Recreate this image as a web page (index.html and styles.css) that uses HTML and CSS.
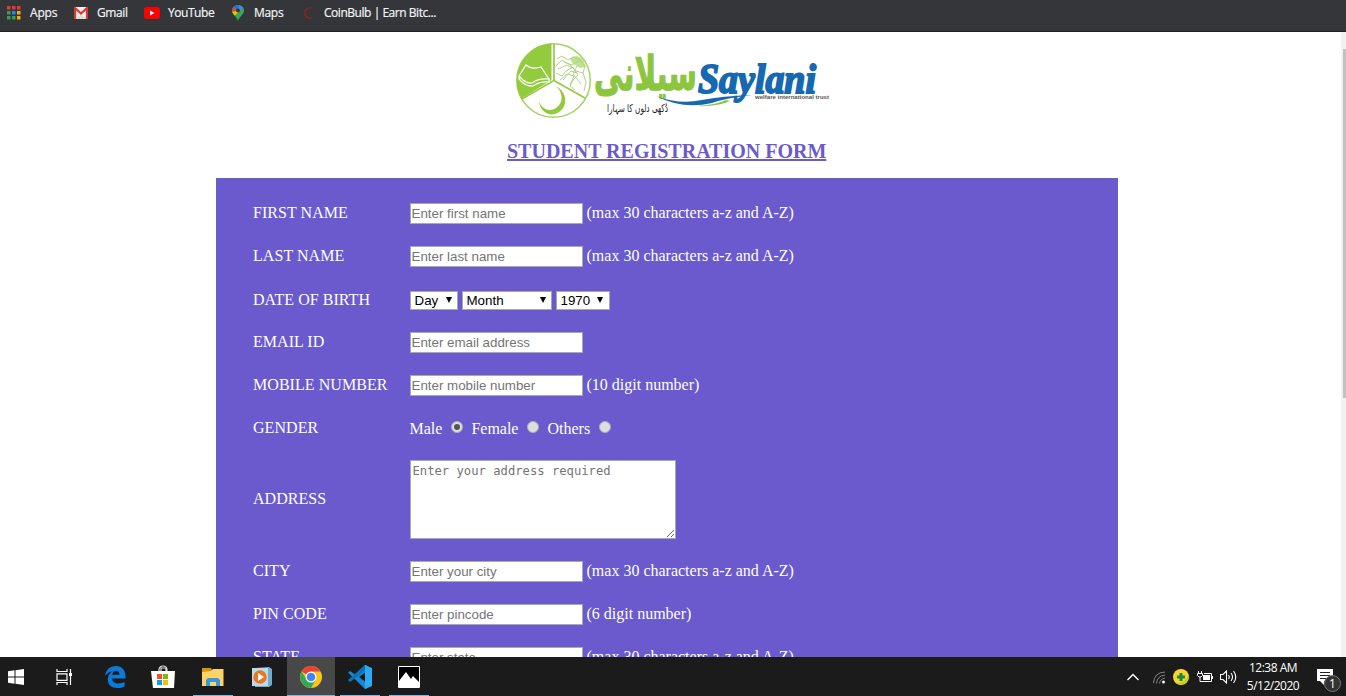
FILE: index.html
```
<!DOCTYPE html>
<html lang="en">
<head>
<meta charset="utf-8">
<title>Student Registration Form</title>
<link rel="stylesheet" href="styles.css">
</head>
<body>
<header class="bookmarks">
  <div class="bm bm-apps"><svg width="14" height="14"><g fill="#e8392f"><path d="M0 0h3.500v3.500H0zM5 0h3.500v3.500H5zM10 0h3.500v3.500H10z"/></g><path fill="#35a055" d="M0 5h3.500v3.500H0zM0 10h3.500v3.500H0z"/><path fill="#2684fc" d="M5 5h3.500v3.500H5z"/><path fill="#35a055" d="M5 10h3.500v3.500H5z"/><path fill="#f9ab00" d="M10 5h3.500v3.500H10zM10 10h3.500v3.500H10z"/></svg><span>Apps</span></div>
  <div class="bm bm-gmail"><svg width="14" height="12"><path fill="#eee" d="M0 0h14v12H0z"/><path fill="#ddd" d="M2 12l5-5 5 5z"/><path fill="none" stroke="#d93a30" stroke-width="2.2" d="M1 12V1l6 5.500L13 1v11"/></svg><span>Gmail</span></div>
  <div class="bm bm-youtube"><svg width="16" height="12"><rect width="16" height="12" rx="3" fill="#f00"/><path fill="#fff" d="M6 3.500v5L10.500 6z"/></svg><span>YouTube</span></div>
  <div class="bm bm-maps"><svg width="12" height="16" viewBox="0 0 12 16"><path fill="#34a853" d="M6 16C5 12 0 9.500 0 5.500a6 5.500 0 0 1 12 0C12 9.500 7 12 6 16z"/><path fill="#4285f4" d="M6 5.500L4 .5a6 5.500 0 0 1 7.500 3z"/><path fill="#1a73e8" d="M6 5.500L1.500 2 4 .4 7 .2z"/><path fill="#ea4335" d="M6 5.500L1.500 2Q0 4 .2 7z"/><path fill="#fbbc04" d="M6 5.500L.2 7 2.500 10.500 8 6z"/><circle cx="6" cy="5.500" r="2" fill="#35363a"/></svg><span>Maps</span></div>
  <div class="bm bm-coin"><svg width="8" height="12"><path fill="none" stroke="#a81c22" stroke-width="1.200" d="M7.500 1H4L1 4v4l3 3h3.500"/></svg><span>CoinBulb | Earn Bitc...</span></div>
</header>

<main class="page">
  <div class="content">
    <svg class="logo" width="330" height="90" viewBox="510 36 330 90" role="img" aria-label="Saylani welfare international trust">
      <circle cx="553.500" cy="80.500" r="36.800" fill="#fff" stroke="#a5d363" stroke-width="1.500"/>
      <path fill="#93cb3f" d="M551.500 80V43.500A37 37 0 0 0 521.500 98.500z"/>
      <path fill="none" stroke="#a5d363" stroke-width="2" d="M554 44v36"/>
      <path fill="none" stroke="#93cb3f" stroke-width="1.600" d="M553 81l-31 18M553 80l32 18"/>
      <path fill="#93cb3f" d="M556 86C569 93 568 110 555 114C547 116 540 110 539 102C543 110 550 112 556 108C564 103 563 92 556 86z"/>
      <path fill="none" stroke="#fff" stroke-width="1.200" d="M519 76l7-11q6 5 15 2l8 12q-11-1-17 4-6 1-13-7zM519 76v3q7 8 14 7 7-5 16-4v-3"/>
      <path fill="#bfe292" d="M570 59q6-6 13 0l3 8-6 1-8-5z"/>
      <path fill="none" stroke="#a9cd80" stroke-width=".9" d="M557 59l5-3 6 4 5-3 7 3 5 6-2 7 3 9-2 9M556 66l6-6 8 5 6 6 7 2M556 73l6 3 4-5 7-4 5 8-5 5-3 6 5 4M560 80l7-6 7 2-4 9M564 62l8 3 6-4M558 69l9-4 5 3M577 66l-4 8 8 10M563 80l8-9 6 2"/>
      <text class="urdu" transform="translate(594 90) scale(1 1.250)" x="0" y="0" textLength="103" lengthAdjust="spacingAndGlyphs">سیلانی</text>
      <path fill="#1668b0" d="M656 96q23 9 46 4 20-4 50-5-26 3-40 8-29 7-56-7z"/>
      <path fill="#8cc63f" d="M696 106q20-1 30-6l4 1q-12 6-34 5z"/>
      <text class="brand" x="698" y="93" textLength="118" lengthAdjust="spacingAndGlyphs">Saylani</text>
      <text class="trust" x="755" y="99" textLength="74" lengthAdjust="spacingAndGlyphs">welfare international trust</text>
      <text class="motto" x="607" y="112" textLength="61" lengthAdjust="spacingAndGlyphs">دُکھی دلوں کا سہارا</text>
    </svg>
    <h1 class="title">STUDENT REGISTRATION FORM</h1>
    <form class="form">
      <div class="row"><label>FIRST NAME</label><div class="field"><input class="text" placeholder="Enter first name"><span>(max 30 characters a-z and A-Z)</span></div></div>
      <div class="row"><label>LAST NAME</label><div class="field"><input class="text" placeholder="Enter last name"><span>(max 30 characters a-z and A-Z)</span></div></div>
      <div class="row row-date"><label>DATE OF BIRTH</label><div class="field">
        <div class="select day">Day<i></i></div><div class="select month">Month<i></i></div><div class="select year">1970<i></i></div></div></div>
      <div class="row"><label>EMAIL ID</label><div class="field"><input class="text" placeholder="Enter email address"></div></div>
      <div class="row"><label>MOBILE NUMBER</label><div class="field"><input class="text" placeholder="Enter mobile number"><span>(10 digit number)</span></div></div>
      <div class="row row-gender"><label>GENDER</label><div class="field"><span>Male</span><b class="radio on"></b><span>Female</span><b class="radio"></b><span>Others</span><b class="radio"></b></div></div>
      <div class="row row-address"><label>ADDRESS</label><div class="field"><textarea class="area" placeholder="Enter your address required"></textarea></div></div>
      <div class="row"><label>CITY</label><div class="field"><input class="text" placeholder="Enter your city"><span>(max 30 characters a-z and A-Z)</span></div></div>
      <div class="row"><label>PIN CODE</label><div class="field"><input class="text" placeholder="Enter pincode"><span>(6 digit number)</span></div></div>
      <div class="row"><label>STATE</label><div class="field"><input class="text" placeholder="Enter state"><span>(max 30 characters a-z and A-Z)</span></div></div>
    </form>
  </div>
  <div class="scrollbar"><div class="thumb"></div></div>
</main>

<footer class="taskbar">
  <div class="apps">
    <div class="app start"><svg width="16" height="16"><path fill="#fff" d="M0 2.200L6.500 1.300V7.500H0zM7.500 1.200L16 0v7.500H7.500zM0 8.500h6.500v6.200L0 13.800zM7.500 8.500H16V16l-8.500-1.200z"/></svg></div>
    <div class="app view"><svg width="17" height="16"><path fill="none" stroke="#fff" stroke-width="1.200" d="M1 0v2.500h10V0M1 4.800h10v6.500H1zM1 16v-2.500h10V16M14.500 0v16"/><path fill="#fff" d="M13 4h3v3h-3z"/></svg></div>
    <div class="app edge"><svg width="21" height="22" viewBox="0 0 21 22"><path fill="#0a7bdc" d="M0 10C1 3.500 5 0 11 0c6 0 9.500 4.500 9.500 10v2.500H7c.2 3.200 3 5 6.500 5 2.300 0 4.200-.7 6-1.700v4.600C17.300 21.600 15 22 12.500 22 6.500 22 2.700 18.500 2.700 13.500c0-3.500 2-6.700 5-8.300C4.500 5.600 2 7.200 0 10zm7.200-1.300h7.300c0-2.500-1.200-4-3.500-4-2 0-3.400 1.600-3.800 4z"/></svg></div>
    <div class="app store"><svg width="24" height="23" viewBox="0 0 24 23"><path fill="none" stroke="#ddd" stroke-width="1.200" d="M8 8V5q0-4 4-4t4 4v3M10 7V3h5v4"/><path fill="#fff" d="M0 6h24l-1 17H2z"/><path fill="#f25022" d="M6 9h5v5H6z"/><path fill="#7fba00" d="M12 9h5v5h-5z"/><path fill="#00a4ef" d="M6 15h5v5H6z"/><path fill="#ffb900" d="M12 15h5v5h-5z"/></svg></div>
    <div class="app open"><svg width="22" height="18"><path fill="#d9920b" d="M0 0h9l1 2v3H0z"/><path fill="#fbd367" d="M0 4l9-1 2-2h10.500v17H0z"/><path fill="#3b97dc" d="M4 18v-6l2-2h10l2 2v6h-4v-4H8v4z"/></svg></div>
    <div class="app"><svg width="20" height="20"><path fill="#6eaecd" d="M3 1l14-1 3 2v16l-3 2H3z"/><path fill="#b8dcec" d="M0 1h16v18H0z"/><circle cx="8" cy="10" r="6.700" fill="#ee7620"/><path fill="#fff" d="M6 6v8l6-4z"/></svg></div>
    <div class="app open active"><svg width="22" height="22" viewBox="-11 -11 22 22"><circle r="11" fill="#fbc51a"/><path fill="#ea4335" d="M0 0L-9.500-5.500A11 11 0 0 1 9.500-5.500H0z"/><path fill="#34a853" d="M-9.500-5.500A11 11 0 0 0 0 11l4.500-8L0 0-4.300 2.500z"/><circle r="5.500" fill="#fff"/><circle r="4.300" fill="#4285f4"/></svg></div>
    <div class="app open"><svg width="24" height="24"><path fill="#1688d4" d="M17 0L7 9.500 2 6 0 7.500 17 24l2-1V1z"/><path fill="#0c73b8" d="M0 15l2 2 17-13V0L17 0z"/><path fill="#2eaaf3" d="M17 0l7 3v18l-7 3z"/><path fill="#1b1b1b" d="M17 7.500v9L11 12z"/></svg></div>
    <div class="app open"><svg width="22" height="22"><path fill="#000" stroke="#fff" stroke-width="1" d="M.5.5h21v21H.5z"/><path fill="#fff" d="M1 15l7-9 5 7 2-3 6 6v5H1z"/></svg></div>
  </div>
  <div class="tray">
    <svg class="chev" width="12" height="8"><path fill="none" stroke="#fff" stroke-width="1.400" d="M.5 7L6 1.500 11.500 7"/></svg>
    <svg class="wifi" width="12" height="13"><g fill="none" stroke="#858585"><path d="M.5 12Q1 1.500 12 1M3.500 12.500Q4 5 12 4M6.500 12.500Q7 8 12 7"/></g><circle cx="10.500" cy="11" r="1.500" fill="#fff"/></svg>
    <svg class="guard" width="16" height="16"><circle cx="8" cy="8" r="8" fill="#f8d62c"/><path fill="#b5cf29" d="M3 14Q12 15 15.500 6A8 8 0 0 1 3 14z"/><path fill="none" stroke="#168a3c" stroke-width="3" d="M8 4v8M4 8h8"/></svg>
    <svg class="battery" width="16" height="12"><path fill="none" stroke="#fff" d="M1.500 0v3M4.500 0v3M.5 2.500h5v2L4 6H2L.5 4.500zM3 6v4.500h11.500v-8H7"/><path fill="#fff" d="M6 4h7v5H6zM15 5h1v3h-1z"/></svg>
    <svg class="volume" width="17" height="14"><path fill="none" stroke="#fff" stroke-width="1.100" d="M.5 4.500H3L6.500 1v12L3 9.500H.500zM8.500 5q1.500 2 0 4M11 3q3 4 0 8M13.500 1q4.500 6 0 12"/></svg>
    <div class="clock"><span class="time">12:38 AM</span><span class="date">5/12/2020</span></div>
    <div class="notice"><svg width="16" height="16"><path fill="#fff" d="M0 0h16v12H7v4l-4-4H0z"/><path stroke="#222" d="M3 3.500h10M3 6.500h10M3 9.500h7"/></svg><span class="badge">1</span></div>
  </div>
</footer>
</body>
</html>
```
FILE: styles.css
```
* { box-sizing: border-box; }
body { margin: 0; width: 1346px; height: 696px; overflow: hidden; display: flex; flex-direction: column; background: #fff; font-family: "Liberation Serif", serif; }
svg { display: block; flex: none; }

.bookmarks { height: 32px; flex: none; display: flex; background: #35363a; border-bottom: 1px solid #202124; padding: 0 0 5px 7px; color: #f1f3f4; font: 12px/14px "Open Sans", sans-serif; }
.bm { display: flex; align-items: center; white-space: nowrap; }
.bm span { -webkit-text-stroke: .2px #f1f3f4; }
.bm svg { margin-right: 9px; }
.bm-apps { width: 67px; }
.bm-apps span { letter-spacing: -.2px; }
.bm-gmail { width: 70px; }
.bm-gmail span { letter-spacing: -.4px; }
.bm-youtube { width: 88px; }
.bm-youtube span { letter-spacing: -.45px; }
.bm-maps { width: 72px; }
.bm-maps span { letter-spacing: -.3px; }
.bm-youtube svg { margin-right: 8px; }
.bm-maps svg { margin-right: 10px; }
.bm-coin svg { margin-right: 12px; }
.bm-coin span { letter-spacing: -.46px; }

.page { height: 625px; flex: none; display: flex; overflow: hidden; }
.content { width: 1341px; display: flex; flex-direction: column; }
.logo { margin: 4px 0 0 510px; }
.urdu { font: bold 38px "DejaVu Sans", sans-serif; fill: #8cc63f; stroke: #8cc63f; stroke-width: 1px; }
.brand { font: italic bold 43px "Liberation Serif", serif; fill: #1668b0; stroke: #1668b0; stroke-width: 2px; }
.trust { font: bold 6px "Liberation Sans", sans-serif; fill: #555; }
.motto { font: 11px "DejaVu Sans", sans-serif; fill: #222; }
.title { margin: 14px 0 0 507px; font-size: 20px; line-height: 22px; color: #6a5acd; text-decoration: underline; text-decoration-thickness: 2px; white-space: nowrap; }
.form { margin: 16px 0 0 216px; width: 902px; height: 560px; flex: none; background: #6a5acd; padding: 14px 0 0 37px; color: #fff; font-size: 16px; line-height: 18px; }
.row { display: flex; align-items: center; height: 43px; }
.row label { width: 157px; flex: none; letter-spacing: .05px; padding-bottom: 2px; }
.row-address { height: 100px; padding-bottom: 2px; }
.row-address label { padding-bottom: 0; }
.field { display: flex; align-items: center; gap: 3.500px; white-space: nowrap; }
.field span { padding-bottom: 2px; }
.text { width: 173px; height: 21px; border: 1px solid #a9a9a9; background: #fff; padding: 1px; margin: 0; font: 13.33px "Liberation Sans", sans-serif; text-indent: -.5px; }
.text::placeholder, .area::placeholder { color: #757575; }
.row-date { padding-top: 1px; }
.row-date label { padding-bottom: 1px; }
.row-date .field { gap: 4px; }
.select { height: 19px; border: 1px solid #a9a9a9; background: #fff; color: #000; padding: 0 5px 0 3.500px; display: flex; justify-content: space-between; align-items: center; font: 13.33px "Liberation Sans", sans-serif; }
.select i { border: solid transparent; border-width: 6px 3.5px 0; border-top-color: #000; }
.day { width: 48px; }
.month { width: 90px; }
.year { width: 54px; padding-right: 6px; }
.row-gender .field { gap: 0; padding-top: 2px; margin-left: -.5px; }
.radio { width: 12px; height: 12px; border: 1px solid #b0b0b0; border-radius: 50%; background: #ddd; margin: 0 8.500px 5px; display: flex; align-items: center; justify-content: center; }
.radio.on::after { content: ""; width: 6px; height: 6px; border-radius: 50%; background: #555; }
.area { width: 266px; height: 79px; border: 1px solid #a9a9a9; padding: 2px 2px 2px 1.500px; margin: 0; font: 12.2px/16px "DejaVu Sans Mono", monospace; resize: both; }

.scrollbar { width: 5px; background: #f1f1f1; padding: 17px 0 0 2px; }
.thumb { height: 349px; background: #c1c1c1; }

.taskbar { height: 39px; flex: none; display: flex; justify-content: space-between; background: #1b1b1b; color: #fff; font: 12px/18px "Open Sans", sans-serif; }
.apps { display: flex; gap: 9px; }
.app { width: 40px; height: 39px; display: flex; align-items: center; justify-content: center; }
.app.start { width: 32px; }
.app.view { margin-left: 3px; }
.app.edge { margin-left: 2px; }
.app.store { margin-left: -1px; margin-right: 1px; }
.app.open { box-shadow: inset 0 -1px #76b9ed; }
.app.active { background: #484848; width: 48px; margin: 0 -4px; }
.tray { display: flex; align-items: center; width: 219px; }
.chev { margin-right: 14px; }
.wifi { margin: 2px 8px 0 0; }
.guard { margin-right: 8px; }
.battery { margin-right: 7px; }
.clock { width: 72px; display: flex; flex-direction: column; align-items: center; letter-spacing: -.5px; margin-top: 1px; }
.notice { position: relative; margin-left: 8px; }
.badge { position: absolute; left: 7px; top: 6px; width: 17px; height: 17px; border: 1px solid #777; border-radius: 50%; background: #333; font-size: 12px; line-height: 15px; text-align: center; }
```
